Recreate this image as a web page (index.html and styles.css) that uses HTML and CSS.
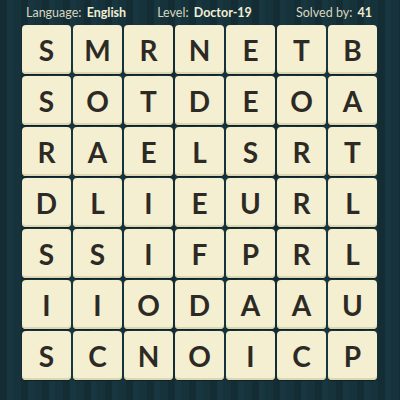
FILE: index.html
```html
<!DOCTYPE html>
<html>
<head>
<meta charset="utf-8">
<link rel="stylesheet" href="styles.css">
</head>
<body>
<div class="page">
  <div class="header">
    <span class="item">Language: <b>English</b></span>
    <span class="item level">Level: <b>Doctor-19</b></span>
    <span class="item solved">Solved by: <b>41</b></span>
  </div>
  <div class="grid">
    <div class="tile">S</div><div class="tile">M</div><div class="tile">R</div><div class="tile">N</div><div class="tile">E</div><div class="tile">T</div><div class="tile">B</div>
    <div class="tile">S</div><div class="tile">O</div><div class="tile">T</div><div class="tile">D</div><div class="tile">E</div><div class="tile">O</div><div class="tile">A</div>
    <div class="tile">R</div><div class="tile">A</div><div class="tile">E</div><div class="tile">L</div><div class="tile">S</div><div class="tile">R</div><div class="tile">T</div>
    <div class="tile">D</div><div class="tile">L</div><div class="tile">I</div><div class="tile">E</div><div class="tile">U</div><div class="tile">R</div><div class="tile">L</div>
    <div class="tile">S</div><div class="tile">S</div><div class="tile">I</div><div class="tile">F</div><div class="tile">P</div><div class="tile">R</div><div class="tile">L</div>
    <div class="tile">I</div><div class="tile">I</div><div class="tile">O</div><div class="tile">D</div><div class="tile">A</div><div class="tile">A</div><div class="tile">U</div>
    <div class="tile">S</div><div class="tile">C</div><div class="tile">N</div><div class="tile">O</div><div class="tile">I</div><div class="tile">C</div><div class="tile">P</div>
  </div>
</div>
</body>
</html>
```
FILE: styles.css
```css
html, body {
  margin: 0;
  padding: 0;
}
body {
  width: 400px;
  height: 400px;
  overflow: hidden;
  background-color: #163239;
  background-image: repeating-linear-gradient(90deg,
    #142d34 0px, #142d34 7px,
    #183640 7px, #183640 13px,
    #16323a 13px, #16323a 21px);
}
.page {
  width: 400px;
  height: 400px;
  display: flex;
  flex-direction: column;
}
.header {
  height: 25px;
  display: flex;
  align-items: center;
  padding: 0 28px 0 26px;
  font-family: "Lato", "Open Sans", sans-serif;
  font-size: 12.5px;
  color: #d9d6bf;
  box-sizing: border-box;
  white-space: nowrap;
}
.header b {
  color: #f2eed3;
  font-weight: 700;
  margin-left: 2px;
}
.level {
  margin-left: 31px;
}
.solved {
  margin-left: auto;
}
.grid {
  margin-left: 22px;
  display: grid;
  grid-template-columns: repeat(7, 49px);
  grid-auto-rows: 49px;
  gap: 2px;
}
.tile {
  background: #f4efd0;
  border-radius: 4px;
  box-shadow: inset 0 -2px 0 #ddd6b2, 0 1px 0 #0d2228;
  display: flex;
  align-items: center;
  justify-content: center;
  font-family: "Lato", sans-serif;
  font-weight: 700;
  font-size: 28px;
  color: #2d2a25;
  padding-top: 1px;
  box-sizing: border-box;
}
```
